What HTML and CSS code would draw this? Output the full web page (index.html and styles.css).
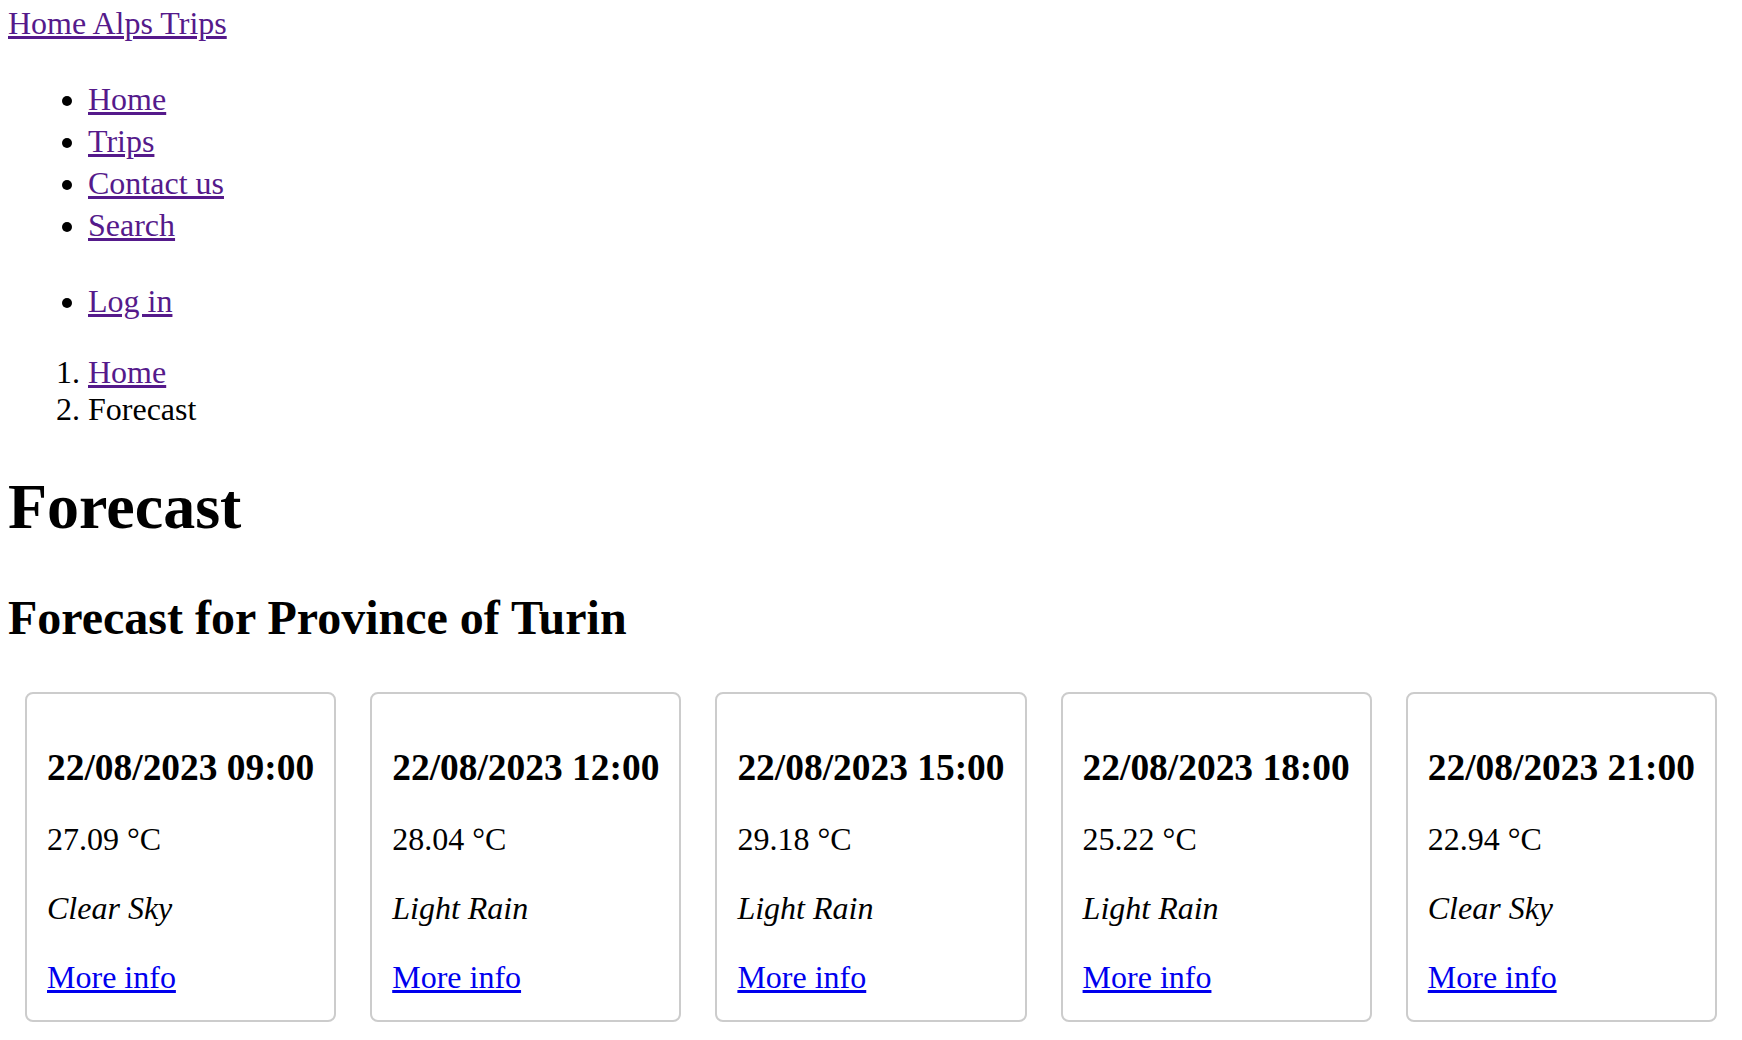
FILE: index.html
```html
<!DOCTYPE html>
<html lang="en">
<head>
<meta charset="utf-8">
<title>Forecast - Home Alps Trips</title>
<link rel="stylesheet" href="styles.css">
</head>
<body>
<div class="page">
  <header class="site-header">
    <a class="brand visited" href="#">Home Alps Trips</a>
    <nav class="site-nav">
      <ul class="nav-list">
        <li><a class="visited" href="#">Home</a></li>
        <li><a class="visited" href="#">Trips</a></li>
        <li><a class="visited" href="#">Contact us</a></li>
        <li><a class="visited" href="#">Search</a></li>
      </ul>
      <ul class="nav-list account">
        <li><a class="visited" href="#">Log in</a></li>
      </ul>
    </nav>
  </header>
  <main>
    <ol class="breadcrumb">
      <li><a class="visited" href="#">Home</a></li>
      <li>Forecast</li>
    </ol>
    <h1 class="page-title">Forecast</h1>
    <h2 class="section-title">Forecast for Province of Turin</h2>
    <ul class="forecast-list">
      <li class="card">
        <h3 class="card-title">22/08/2023 09:00</h3>
        <p class="card-text">27.09 °C</p>
        <p class="card-text"><em>Clear Sky</em></p>
        <p class="card-text"><a class="link" href="#">More info</a></p>
      </li>
      <li class="card">
        <h3 class="card-title">22/08/2023 12:00</h3>
        <p class="card-text">28.04 °C</p>
        <p class="card-text"><em>Light Rain</em></p>
        <p class="card-text"><a class="link" href="#">More info</a></p>
      </li>
      <li class="card">
        <h3 class="card-title">22/08/2023 15:00</h3>
        <p class="card-text">29.18 °C</p>
        <p class="card-text"><em>Light Rain</em></p>
        <p class="card-text"><a class="link" href="#">More info</a></p>
      </li>
      <li class="card">
        <h3 class="card-title">22/08/2023 18:00</h3>
        <p class="card-text">25.22 °C</p>
        <p class="card-text"><em>Light Rain</em></p>
        <p class="card-text"><a class="link" href="#">More info</a></p>
      </li>
      <li class="card">
        <h3 class="card-title">22/08/2023 21:00</h3>
        <p class="card-text">22.94 °C</p>
        <p class="card-text"><em>Clear Sky</em></p>
        <p class="card-text"><a class="link" href="#">More info</a></p>
      </li>
    </ul>
  </main>
</div>
</body>
</html>
```
FILE: styles.css
```css
html, body {
  margin: 0;
  padding: 0;
  background: #ffffff;
}

body {
  font-family: "Liberation Serif", "Times New Roman", Times, serif;
  font-size: 32px;
  line-height: 37px;
  color: #000000;
}

.page {
  padding: 5px 8px 8px;
}

a {
  text-decoration: underline;
}

.visited {
  color: #551a8b;
}

.link {
  color: #0000ee;
}

.site-header {
  display: block;
}

.nav-list {
  margin: 36px 0 0;
  padding-left: 80px;
  list-style: disc;
}

.nav-list li {
  line-height: 42px;
}

.nav-list.account {
  margin-top: 34px;
}

.breadcrumb {
  margin: 32px 0 0;
  padding-left: 80px;
}

.page-title {
  font-size: 64px;
  line-height: 74px;
  font-weight: bold;
  margin: 42px 0 0;
}

.section-title {
  font-size: 48px;
  line-height: 55px;
  font-weight: bold;
  margin: 46px 0 0;
}

.forecast-list {
  list-style: none;
  margin: 47px 0 0;
  padding: 0;
  display: flex;
  justify-content: space-around;
  align-items: flex-start;
}

.card {
  border: 2px solid #cccccc;
  border-radius: 8px;
  padding: 20px 20px 24px;
}

.card-title {
  font-size: 37.44px;
  line-height: 43px;
  font-weight: bold;
  white-space: nowrap;
  margin: 32px 0;
}

.card-text {
  margin: 32px 0 0;
}

.card-text em {
  font-style: italic;
}
```
